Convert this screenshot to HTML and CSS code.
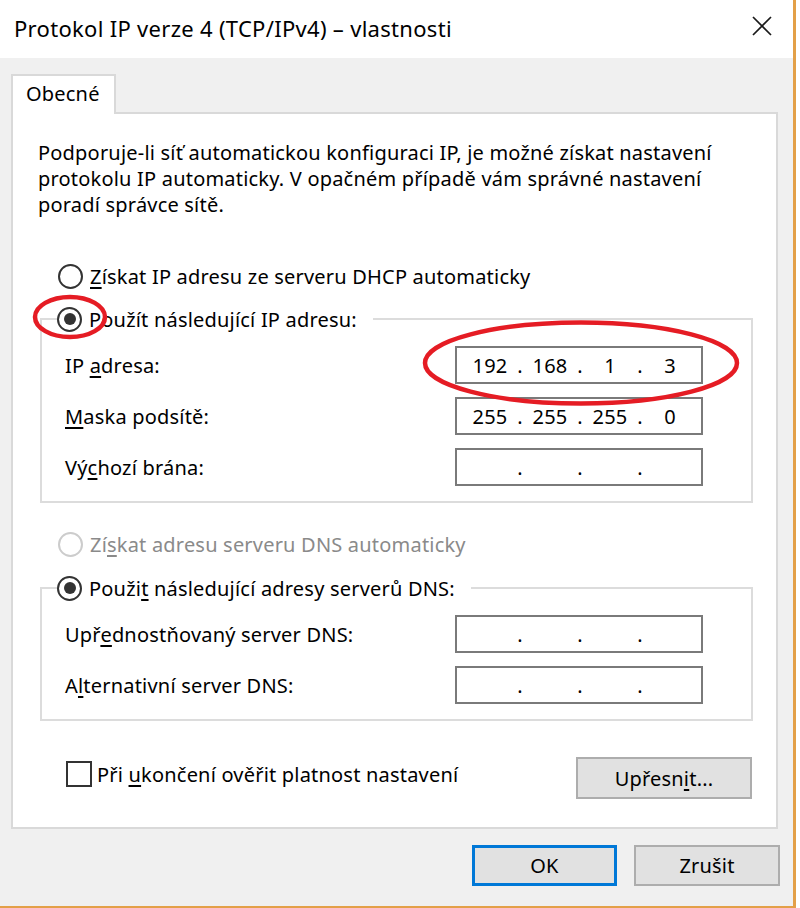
FILE: index.html
```html
<!DOCTYPE html>
<html lang="cs">
<head>
  <meta charset="UTF-8">
  <meta name="viewport" content="width=device-width, initial-scale=1.0">
  <title>Protokol IP verze 4 (TCP/IPv4) – vlastnosti</title>
  <link rel="stylesheet" href="styles.css">
</head>
<body>
  <div class="window">
    <!-- Title bar -->
    <div class="titlebar">
      <span class="title">Protokol IP verze 4 (TCP/IPv4) – vlastnosti</span>
      <svg class="close" width="20" height="20" viewBox="0 0 20 20">
        <path d="M1 1 L19 19 M19 1 L1 19" stroke="#1a1a1a" stroke-width="1.7" fill="none"/>
      </svg>
    </div>

    <div class="dialog">
      <div class="tabs">
        <div class="tab">Obecné</div>
      </div>

      <div class="panel">
        <p class="intro">Podporuje-li síť automatickou konfiguraci IP, je možné získat nastavení<br>protokolu IP automaticky. V opačném případě vám správné nastavení<br>poradí správce sítě.</p>

        <div class="radio-row">
          <span class="radio"></span>
          <span><u>Z</u>ískat IP adresu ze serveru DHCP automaticky</span>
        </div>

        <fieldset class="group">
          <legend class="radio-row"><span class="radio checked"></span><span>Použít následující IP adresu:</span></legend>
          <div class="field">
            <span>IP <u>a</u>dresa:</span>
            <div class="ip"><span class="oct">192</span><span class="dot">.</span><span class="oct">168</span><span class="dot">.</span><span class="oct">1</span><span class="dot">.</span><span class="oct">3</span></div>
          </div>
          <div class="field">
            <span><u>M</u>aska podsítě:</span>
            <div class="ip"><span class="oct">255</span><span class="dot">.</span><span class="oct">255</span><span class="dot">.</span><span class="oct">255</span><span class="dot">.</span><span class="oct">0</span></div>
          </div>
          <div class="field">
            <span>Vý<u>c</u>hozí brána:</span>
            <div class="ip"><span class="oct"></span><span class="dot">.</span><span class="oct"></span><span class="dot">.</span><span class="oct"></span><span class="dot">.</span><span class="oct"></span></div>
          </div>
        </fieldset>

        <div class="radio-row disabled dns-auto">
          <span class="radio"></span>
          <span>Zí<u>s</u>kat adresu serveru DNS automaticky</span>
        </div>

        <fieldset class="group">
          <legend class="radio-row"><span class="radio checked"></span><span>Použi<u>t</u> následující adresy serverů DNS:</span></legend>
          <div class="field">
            <span>Upř<u>e</u>dnostňovaný server DNS:</span>
            <div class="ip"><span class="oct"></span><span class="dot">.</span><span class="oct"></span><span class="dot">.</span><span class="oct"></span><span class="dot">.</span><span class="oct"></span></div>
          </div>
          <div class="field">
            <span>A<u>l</u>ternativní server DNS:</span>
            <div class="ip"><span class="oct"></span><span class="dot">.</span><span class="oct"></span><span class="dot">.</span><span class="oct"></span><span class="dot">.</span><span class="oct"></span></div>
          </div>
        </fieldset>

        <div class="panel-bottom">
          <label class="check-row">
            <span class="checkbox"></span>
            <span>Při <u>u</u>končení ověřit platnost nastavení</span>
          </label>
          <button class="btn advanced">Upřesn<u>i</u>t...</button>
        </div>
      </div>

      <div class="dialog-buttons">
        <button class="btn default">OK</button>
        <button class="btn">Zrušit</button>
      </div>
    </div>

    <!-- red annotation marks -->
    <svg class="marks" width="796" height="908" viewBox="0 0 796 908">
      <ellipse cx="70" cy="317" rx="35" ry="20" fill="none" stroke="#e51c24" stroke-width="4.5"/>
      <ellipse cx="581" cy="363" rx="156" ry="40.5" fill="none" stroke="#e51c24" stroke-width="4.5"/>
    </svg>
  </div>
</body>
</html>
```

FILE: styles.css
```css
body {
  margin: 0;
  background: #fff;
  font-family: "Noto Sans", "Open Sans", sans-serif;
  font-size: 20px;
  letter-spacing: 0.2px;
  color: #000;
}

u {
  text-decoration-thickness: 1.5px;
  text-underline-offset: 3px;
}

.window {
  position: relative;
  width: 793px;
  height: 906px;
  border-right: 3px solid #e3a048;
  border-bottom: 2px solid #e3a048;
  background: #f0f0f0;
}

/* Title bar */
.titlebar {
  height: 58px;
  background: #fff;
  display: flex;
  align-items: center;
  justify-content: space-between;
  padding: 0 21px 2px 14px;
  box-sizing: border-box;
}

.title {
  font-size: 22px;
  letter-spacing: 0.3px;
}

.close {
  margin-top: -4px;
}

/* Dialog body */
.dialog {
  padding: 16px 0 0 11px;
}

.tabs {
  display: flex;
}

.tab {
  position: relative;
  z-index: 1;
  width: 105px;
  height: 40px;
  box-sizing: border-box;
  border: 2px solid #d9d9d9;
  border-bottom: none;
  background: #fff;
  margin-bottom: -2px;
  padding: 4px 0 0 13px;
}

.panel {
  width: 767px;
  box-sizing: border-box;
  border: 2px solid #d9d9d9;
  background: #fff;
  padding: 26px 24px 28px 27px;
}

.intro {
  margin: 0 0 0 -2px;
  line-height: 26px;
}

/* Radios */
.radio-row {
  display: flex;
  align-items: center;
  gap: 7px;
  height: 26px;
  margin-left: 18px;
}

.panel > .radio-row {
  margin-top: 45px;
}

.radio {
  flex: none;
  width: 25px;
  height: 25px;
  box-sizing: border-box;
  border: 2px solid #333;
  border-radius: 50%;
  background: #fff;
  display: flex;
  align-items: center;
  justify-content: center;
}

.radio.checked::after {
  content: "";
  width: 12px;
  height: 12px;
  border-radius: 50%;
  background: #333;
}

.disabled {
  color: #8a8a8a;
}

.disabled .radio {
  border-color: #cccccc;
}

.panel > .dns-auto {
  margin-top: 28px;
}

/* Group boxes */
.group {
  margin: 17px 0 0 0;
  width: 713px;
  box-sizing: border-box;
  border: 2px solid #dcdcdc;
  padding: 0 0 15px 15px;
  min-inline-size: 0;
}

.dns-auto + .group {
  margin-top: 18px;
}

.group legend {
  padding: 0 16px 0 0;
  margin-left: 0;
}

.field {
  display: flex;
  align-items: center;
  justify-content: space-between;
  padding: 0 48px 0 8px;
  margin-top: 13px;
}

legend + .field {
  margin-top: 14px;
}

.ip {
  width: 248px;
  height: 38px;
  box-sizing: border-box;
  border: 2px solid #7a7a7a;
  display: flex;
  align-items: center;
  padding-left: 8px;
}

.oct {
  width: 50px;
  text-align: center;
}

.dot {
  width: 10px;
  text-align: center;
}

/* Bottom of panel */
.panel-bottom {
  display: flex;
  justify-content: space-between;
  align-items: flex-start;
  width: 712px;
  margin-top: 36px;
}

.check-row {
  display: flex;
  align-items: center;
  gap: 5px;
  height: 26px;
  margin: 4px 0 0 26px;
}

.checkbox {
  flex: none;
  width: 26px;
  height: 26px;
  box-sizing: border-box;
  border: 2px solid #333;
  background: #fff;
}

.btn {
  font-family: inherit;
  font-size: 20px;
  letter-spacing: 0.2px;
  color: #000;
  background: #e1e1e1;
  border: 2px solid #adadad;
  padding: 0;
  width: 146px;
  height: 41px;
}

.btn.advanced {
  width: 176px;
  height: 42px;
}

.btn.default {
  border: 3px solid #0078d7;
  width: 145px;
}

.dialog-buttons {
  display: flex;
  justify-content: flex-end;
  gap: 17px;
  width: 769px;
  margin-top: 16px;
}

/* annotations drawn over the dialog */
.marks {
  position: absolute;
  left: 0;
  top: 0;
  pointer-events: none;
}
```
